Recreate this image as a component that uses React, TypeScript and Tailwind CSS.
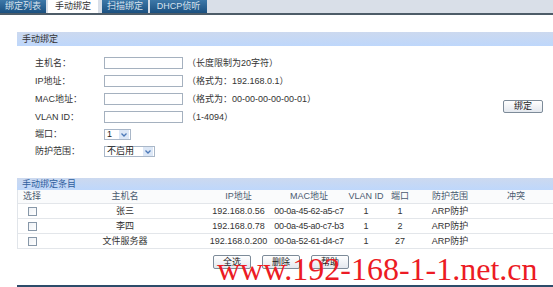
import { ReactNode } from 'react'

const tabs = [
  { label: '绑定列表', w: 'w-[46px]', ml: '' },
  { label: '手动绑定', w: 'w-[50px]', ml: 'ml-[2px]', active: true },
  { label: '扫描绑定', w: 'w-[46px]', ml: 'ml-[4px]' },
  { label: 'DHCP侦听', w: 'w-[57px]', ml: 'ml-[2px]' },
]

const fields = [
  { label: '主机名：', hint: '（长度限制为20字符）' },
  { label: 'IP地址：', hint: '（格式为：192.168.0.1）' },
  { label: 'MAC地址：', hint: '（格式为：00-00-00-00-00-01）' },
  { label: 'VLAN ID：', hint: '（1-4094）' },
]

const entries = [
  { name: '张三', ip: '192.168.0.56', mac: '00-0a-45-62-a5-c7', vlan: '1', port: '1', scope: 'ARP防护' },
  { name: '李四', ip: '192.168.0.78', mac: '00-0a-45-a0-c7-b3', vlan: '1', port: '2', scope: 'ARP防护' },
  { name: '文件服务器', ip: '192.168.0.200', mac: '00-0a-52-61-d4-c7', vlan: '1', port: '27', scope: 'ARP防护' },
]

// column widths of the entries table
const cols = 'grid grid-cols-[26px_162px_65px_76px_38px_30px_70px_1fr]'

function Btn({ children }: { children: ReactNode }) {
  return (
    <button className="w-[38px] h-[14px] flex items-center justify-center rounded-[2px] border border-[#7d8b99] bg-gradient-to-b from-white to-[#e4e8ee] text-[9px] leading-none text-[#222]">
      {children}
    </button>
  )
}

function FakeSelect({ value, width }: { value: string; width: string }) {
  return (
    <div className={`${width} h-[11px] flex items-center border border-[#a9b7c8] bg-white`}>
      <span className="flex-1 pl-[2px] text-[9px] leading-none text-[#222]">{value}</span>
      <span className="w-[10px] h-[9px] mr-[1px] flex items-center justify-center bg-[#dce7f6]">
        <svg width="6" height="4" viewBox="0 0 6 4">
          <path d="M0.5 0.5 L3 3 L5.5 0.5" fill="none" stroke="#4c79b8" strokeWidth="1.3" />
        </svg>
      </span>
    </div>
  )
}

function Checkbox() {
  return <div className="w-[9px] h-[9px] border border-[#8797a8] bg-gradient-to-br from-[#eef1f5] to-white" />
}

export default function App() {
  return (
    <div className="relative w-[553px] h-[287px] bg-white overflow-hidden font-['Liberation_Sans','Noto_Sans_CJK_SC',sans-serif] text-[9px] text-[#333]">
      {/* Tab bar */}
      <div className="h-[15px] flex bg-[#d9dfe8] border-b-2 border-[#4d5c68]">
        {tabs.map(t => (
          <div
            key={t.label}
            className={`${t.w} ${t.ml} h-[13px] flex items-center justify-center leading-none ${
              t.active
                ? 'bg-white text-[#333]'
                : 'bg-gradient-to-b from-[#3d78a8] to-[#1b5080] text-[#d6e2ee]'
            }`}
          >
            {t.label}
          </div>
        ))}
      </div>

      <div className="pl-[17px]">
        {/* Manual binding form */}
        <div className="mt-[17px] h-[14px] flex items-center pl-[5px] bg-gradient-to-b from-[#ccd9ef] to-[#bed7fb] leading-none">
          手动绑定
        </div>

        <div className="mt-[8px] flex items-center">
          <div className="flex flex-col pl-[18px]">
            {fields.map(f => (
              <div key={f.label} className="h-[18px] flex items-center">
                <span className="w-[69px] leading-none">{f.label}</span>
                <div className="w-[79px] h-[12px] border border-[#a5b1bf] bg-white" />
                <span className="ml-[4px] leading-none">{f.hint}</span>
              </div>
            ))}
            <div className="h-[17px] flex items-center">
              <span className="w-[69px] leading-none">端口：</span>
              <FakeSelect value="1" width="w-[27px]" />
            </div>
            <div className="h-[17px] flex items-center">
              <span className="w-[69px] leading-none">防护范围：</span>
              <FakeSelect value="不启用" width="w-[51px]" />
            </div>
          </div>
          <div className="ml-auto mr-[10px] mt-[-1px]">
            <button className="w-[40px] h-[13px] flex items-center justify-center rounded-[2px] border border-[#7d8b99] bg-gradient-to-b from-white to-[#e4e8ee] text-[9px] leading-none text-[#222]">
              绑定
            </button>
          </div>
        </div>

        {/* Binding entries table */}
        <div className="mt-[18px] h-[12px] flex items-center pl-[5px] bg-gradient-to-b from-[#ccd9ef] to-[#bed7fb] leading-none text-[#2f5e9e]">
          手动绑定条目
        </div>
        <div className="border-l border-[#e1e5ea]">
          <div className={`${cols} h-[14px] items-center leading-none text-[#4a5a70] bg-[#fafbfc] border-b border-[#e3e6ea]`}>
            <span className="pl-[5px]">选择</span>
            <span className="text-center">主机名</span>
            <span className="text-center">IP地址</span>
            <span className="text-center">MAC地址</span>
            <span className="text-center">VLAN ID</span>
            <span className="text-center">端口</span>
            <span className="text-center">防护范围</span>
            <span className="text-center pr-[6px]">冲突</span>
          </div>
          {entries.map(e => (
            <div key={e.name} className={`${cols} h-[15px] items-center leading-none text-[#333] border-b border-[#e3e6ea]`}>
              <span className="pl-[10px]">
                <Checkbox />
              </span>
              <span className="text-center">{e.name}</span>
              <span className="text-center">{e.ip}</span>
              <span className="text-center tracking-[-0.3px]">{e.mac}</span>
              <span className="text-center">{e.vlan}</span>
              <span className="text-center">{e.port}</span>
              <span className="text-center">{e.scope}</span>
              <span />
            </div>
          ))}
        </div>

        <div className="mt-[6px] flex gap-[11px] pl-[196px]">
          <Btn>全选</Btn>
          <Btn>删除</Btn>
          <Btn>帮助</Btn>
        </div>

        <div className="mt-[16px] h-[3px] bg-[#2d4c6a]" />
      </div>

      {/* Watermark */}
      <div className="absolute left-[217px] top-[253px] font-['Liberation_Serif',serif] text-[32px] leading-none text-[#ec1b24] whitespace-nowrap">
        www.192-168-1-1.net.cn
      </div>
    </div>
  )
}
